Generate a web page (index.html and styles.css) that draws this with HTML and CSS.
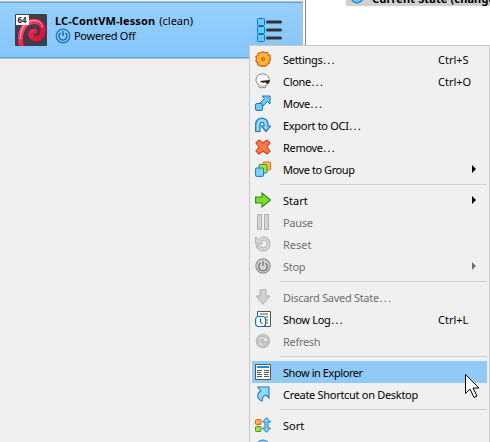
FILE: index.html
```html
<!DOCTYPE html>
<html lang="en">
<head>
<meta charset="utf-8">
<title>Virtual machines</title>
<link rel="stylesheet" href="styles.css">
</head>
<body>
<div class="window">
  <div class="machines">
    <div class="machine">
      <svg class="os" viewBox="0 0 32 32">
        <defs><linearGradient id="red" x2="1" y2="1"><stop stop-color="#ff5f78"/><stop offset=".5" stop-color="#e8224c"/><stop offset="1" stop-color="#b80f33"/></linearGradient></defs>
        <rect width="32" height="32" rx="1" fill="#37424c"/>
        <path d="M6.500 32C3 19 9 7.500 19 7.500c7 0 10 5.500 9 11-1.500 8-12 8.500-12 2 0-3.500 4-4.500 5-2" fill="none" stroke="#8d1730" stroke-width="6.500" stroke-linecap="round"/>
        <path d="M6.500 32C3 19 9 7.500 19 7.500c7 0 10 5.500 9 11-1.500 8-12 8.500-12 2 0-3.500 4-4.500 5-2" fill="none" stroke="url(#red)" stroke-width="5" stroke-linecap="round"/>
        <path d="M20.500 12c4 2 3.500 9-1 8.500" fill="none" stroke="#37424c" stroke-width="2" stroke-linecap="round"/>
        <path d="M5.500 25C5 14 11 6.500 19 6.500c5 0 8 3 8.500 7" fill="none" stroke="#ffa3b3" stroke-width="1.200"/>
        <rect x="1" y="1" width="13" height="10" fill="#fff"/>
        <text x="2.500" y="9" class="bits">64</text>
      </svg>
      <div class="info">
        <div class="title"><b class="name">LC-ContVM-lesson</b><span class="snap">(clean)</span></div>
        <div class="state">
          <svg class="power" viewBox="0 0 16 16"><circle cx="8" cy="8" r="6.800" fill="#83d0fa" stroke="#1c76bd" stroke-width="1.300"/><path d="M5.500 5a4 4 0 1 0 5 0M8 3v5" fill="none" stroke="#164e84" stroke-width="1.200"/></svg>
          <span class="off">Powered Off</span>
        </div>
      </div>
      <svg class="tools" viewBox="0 0 25 24">
        <g fill="#5dd2fc" stroke="#176bc0"><rect x=".5" y=".5" width="7" height="7" rx="1"/><rect x=".5" y="8.500" width="7" height="7" rx="1"/><rect x=".5" y="16.500" width="7" height="7" rx="1"/></g>
        <path d="M10.500 4H23.500M10.500 12H23.500M10.500 20H23.500" stroke="#303338" stroke-width="3" stroke-linecap="round"/>
      </svg>
    </div>
  </div>
  <div class="details">
    <div class="current">
      <svg class="dot" viewBox="0 0 16 16"><circle cx="8" cy="8" r="6.800" fill="#5fc9fa" stroke="#1c76bd" stroke-width="1.300"/></svg>
      <b class="cur">Current State (changed)</b>
    </div>
  </div>
</div>

<div class="menu">
  <div class="item"><svg viewBox="0 0 16 16"><path d="M6 1.500L8 .7l2 .8 2.300-.1.800 2 2 1-.2 2.300.6 1.800-1.200 1.700-.1 2.200-2 .9-1.200 1.800-2.100-.2-2 .9-1.700-1.500-2.300-.3-.5-2.200L.9 10l.5-2.200-.6-2 1.900-1.300.4-2.300z" fill="#ffb43c" stroke="#e45a12" stroke-width="1.200"/><circle cx="8" cy="8" r="1.700" fill="#f57c21" stroke="#c65b12" stroke-width=".7"/></svg><span class="label">Settings<span class="dots">...</span></span><kbd>Ctrl+S</kbd></div>
  <div class="item"><svg viewBox="0 0 16 16"><path d="M4 12C-.5 10 0 2 6 1c6-1 9 3 8 8-1 2-2 3-3 3v2l-2 1-1-1-2 1-2-1z" fill="#f8f8f8" stroke="#888"/><path d="M5 8l10-1-1 3-2 1-2-2-1 1-3-1z" fill="#222"/><path d="M6 12v3M8 12v3M10 12v3" stroke="#888" stroke-width=".6"/></svg><span class="label">Clone<span class="dots">...</span></span><kbd>Ctrl+O</kbd></div>
  <div class="item"><svg viewBox="0 0 16 16"><g fill="#6ccbfa" stroke="#2274c5"><path d="M7 1h8v8l-2.500-2.500L8 11 5 8l4.500-4.500z"/><rect x=".5" y="8.500" width="7" height="7" rx="1.500"/></g></svg><span class="label">Move<span class="dots">...</span></span></div>
  <div class="item"><svg viewBox="0 0 16 16"><path d="M.7 14.500V7.500C.7-1 13-1 13 7.500V9h2.500L11 14.500 6.500 9H9V7.500c0-3-4-3-4 0v7z" fill="#8edafc" stroke="#2474bd" stroke-width="1.200"/></svg><span class="label">Export to OCI<span class="dots">...</span></span></div>
  <div class="item"><svg viewBox="0 0 16 16"><path d="M1 4l3-3 4 3L12 1l3 3-3 4 3 4-3 3-4-3-4 3-3-3 3-4z" fill="#fb784a" stroke="#d34520" stroke-width="1.100" stroke-linejoin="round"/></svg><span class="label">Remove<span class="dots">...</span></span></div>
  <div class="item"><svg viewBox="0 0 16 16"><rect x="8" y="1" width="7.500" height="8" rx="1" fill="#ffbd55" stroke="#db6b20"/><rect x="4" y="3.500" width="8" height="8.500" rx="1" fill="#9bea45" stroke="#35931e"/><rect x=".6" y="7" width="8" height="8.400" rx="1" fill="#79d5fc" stroke="#2071bd"/></svg><span class="label tight">Move to Group</span><i class="arrow"></i></div>
  <hr>
  <div class="item"><svg viewBox="0 0 16 16"><path d="M.6 5H7V1l8.400 7L7 15v-4H.6z" fill="#79df2b" stroke="#338d15" stroke-width="1.100"/></svg><span class="label loose">Start</span><i class="arrow"></i></div>
  <div class="item disabled"><svg viewBox="0 0 16 16"><path d="M2.500.5h4v15h-4zM9.500.5h4v15h-4z" fill="#d4d4d4" stroke="#b0b0b0"/></svg><span class="label">Pause</span></div>
  <div class="item disabled"><svg viewBox="0 0 16 16"><path d="M3.500 3.500C9-2 15 2 15 8c0 8-11 10-14 2l3-1c2 4 8 3 8-1 0-3-4-5-6-2l1.500 2H.7V1z" fill="#d6d6d6" stroke="#adadad"/></svg><span class="label loose">Reset</span></div>
  <div class="item disabled"><svg viewBox="0 0 16 16"><circle cx="8" cy="8" r="7.100" fill="#d5d5d5" stroke="#909090" stroke-width="1.200"/><path d="M5.500 5a4.300 4.300 0 1 0 5 0M8 3v5" fill="none" stroke="#686868" stroke-width="1.200"/></svg><span class="label">Stop</span><i class="arrow"></i></div>
  <hr>
  <div class="item disabled"><svg viewBox="0 0 16 16"><path d="M5 .7h6V7h4L8 15.400 1 7h4z" fill="#d2d2d2" stroke="#b0b0b0"/></svg><span class="label">Discard Saved State<span class="dots">...</span></span></div>
  <div class="item"><svg viewBox="0 0 16 16"><path d="M2.500.5h13v15h-13z" fill="#fff" stroke="#555"/><path d="M5 3h8M11 6h2M11 9h2M11 12h2" stroke="#555"/><rect x=".6" y="5.500" width="10" height="10" rx="3" fill="#fff" stroke="#1671c9" stroke-width="1.200"/><path d="M5.500 7.500V11l2 2" fill="none" stroke="#174068"/></svg><span class="label">Show Log<span class="dots">...</span></span><kbd>Ctrl+L</kbd></div>
  <div class="item disabled"><svg viewBox="0 0 16 16"><circle cx="8" cy="8" r="6.800" fill="#d0d0d0" stroke="#b8b8b8"/><path d="M3 8c0-5 6-6 8-3l2-1v5H8l1-2c-2-2-4-1-5 1M13 9c0 5-6 6-8 3l-2 1V9h5l-1 2c2 2 4 1 5-1" fill="#e2e2e2" stroke="#aaa" stroke-width=".8"/></svg><span class="label">Refresh</span></div>
  <hr>
  <div class="item selected"><svg viewBox="0 0 16 16"><path d="M.5.5h15v15H.5z" fill="#fff" stroke="#555"/><path d="M2 3h12" stroke="#168be3" stroke-width="2"/><path d="M2 6.500h5M9 6.500h5M2 8.500h4M9 8.500h5M2 10.500h5M9 10.500h4M2 12.500h5M9 12.500h5" stroke="#555"/></svg><span class="label tight">Show in Explorer</span></div>
  <div class="item"><svg viewBox="0 0 16 16"><path d="M3 1h11v11l-3-3c-3 1-4 3-4 6C1 13 2 7 6 5z" fill="#8edafc" stroke="#287cc0" stroke-width="1.100"/></svg><span class="label">Create Shortcut on Desktop</span></div>
  <hr>
  <div class="item"><svg viewBox="0 0 16 16"><rect x=".5" y="2.500" width="5.500" height="5" rx="1" fill="#ffb347" stroke="#df5b1a"/><rect x=".5" y="9.500" width="5.500" height="5" rx="1" fill="#9be642" stroke="#439220"/><path d="M11.500.7L15.500 5H13v6h2.500l-4 4.300-4-4.300H10V5H7.500z" fill="#79d5fc" stroke="#2878bf"/></svg><span class="label loose">Sort</span></div>
  <div class="item"><svg viewBox="0 0 16 16"><circle cx="8" cy="8" r="7" fill="#8edafc" stroke="#287cc0"/></svg></div>
</div>
<svg class="cursor" viewBox="0 0 17 26"><path d="M1.500 1.500v19l4.500-4.500 4 8.500 3-1.500-4-8h6z" fill="#fff" stroke="#000"/></svg>
</body>
</html>
```

FILE: styles.css
```css
* { box-sizing: border-box; }
body { margin: 0; width: 490px; height: 442px; overflow: hidden; background: #fff; color: #000; font: 11px/14px "Noto Sans", sans-serif; position: relative; }
svg { display: block; flex: none; }
.window { display: flex; height: 442px; }
.machines { width: 306px; background: #efefef; border-right: 1px solid #858585; padding: 1px 0 0; }
.machine { display: flex; width: 303px; height: 58px; border: 1px solid #bdbdbd; border-width: 1px 1px 1px 0; padding: 12px 0 0 15px; background: linear-gradient(#98d0ff, #84c5fa); box-shadow: inset 0 1px #46aaf0, inset 0 -1px #46aaf0; }
.machines { background: linear-gradient(90deg, #efefef 303px, #fff 303px); }
.os { width: 32px; height: 32px; }
.bits { font: bold 8px "Noto Sans", sans-serif; fill: #222; }
.info { margin-left: 8px; width: 202px; }
.title { display: flex; gap: 4px; height: 14px; }
.name { letter-spacing: .12px; }
.state { display: flex; gap: 3px; height: 16px; }
.off { letter-spacing: -.28px; padding-top: 1px; }
.power { width: 16px; height: 16px; }
.tools { width: 25px; height: 24px; margin-top: 4px; }
.details { flex: 1; padding-left: 40px; overflow: hidden; }
.current { display: flex; height: 6px; background: #d0d0d0; overflow: hidden; align-items: flex-end; padding-left: 4px; gap: 8px; white-space: nowrap; }
.cur { letter-spacing: .12px; }
.dot { width: 14px; height: 14px; margin-bottom: 2px; }
.menu { position: absolute; left: 249px; top: 45px; width: 241px; height: 400px; padding: 2px; background: #f0f0f0; border: 1px solid #c8c8c8; overflow: hidden; }
.item { display: flex; align-items: center; height: 22px; padding-left: 3px; white-space: nowrap; }
.item svg { width: 16px; height: 16px; margin-right: 12px; }
.label { padding-top: 2px; letter-spacing: -.3px; }
.tight { letter-spacing: -.43px; }
.loose { letter-spacing: 0; }
.dots { letter-spacing: 1.3px; margin-left: .6px; }
.item kbd { font: inherit; padding-top: 2px; position: absolute; left: 188px; }
.menu hr { height: 1px; border: 0; background: #d0d0d0; margin: 4px 0 4px 28px; }
.disabled { color: #707070; }
.selected { background: #91c9f7; }
.arrow { width: 0; height: 0; border: 4px solid transparent; border-left: 4px solid currentColor; border-right: 0; margin-left: auto; margin-right: 11px; }
.cursor { position: absolute; left: 464px; top: 373px; width: 17px; height: 26px; }
```
